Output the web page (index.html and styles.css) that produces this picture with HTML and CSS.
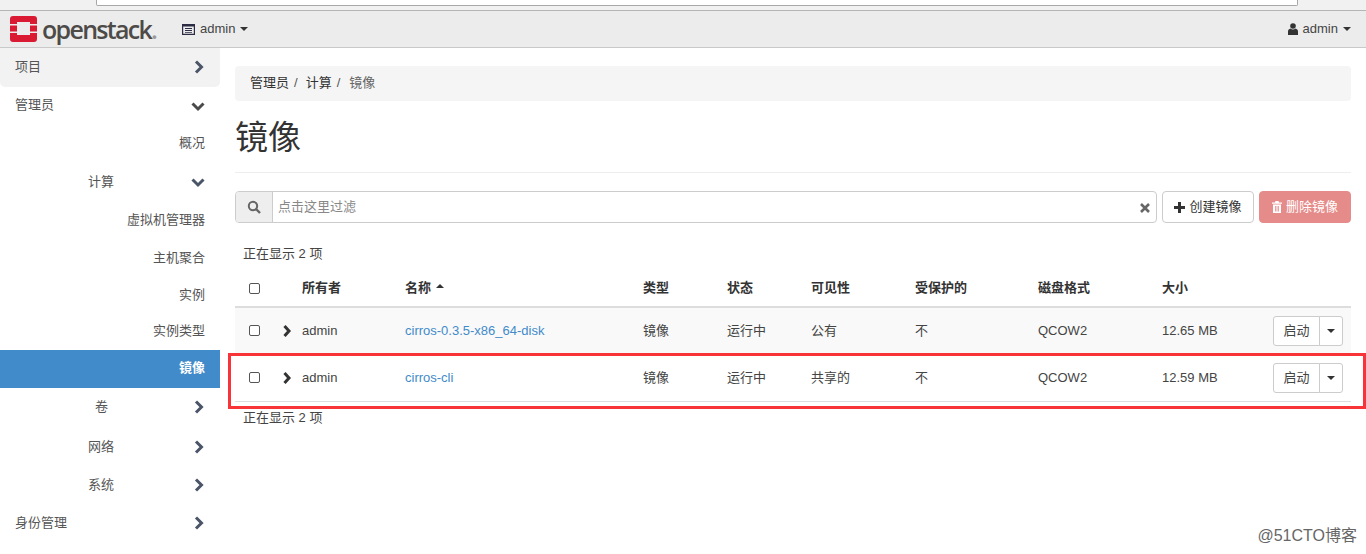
FILE: index.html
```
<!DOCTYPE html>
<html lang="zh-CN">
<head>
<meta charset="utf-8">
<title>镜像 - OpenStack</title>
<link rel="stylesheet" href="styles.css">
</head>
<body>
<div class="chrome"><div class="chrome-url"></div></div>
<header class="navbar">
  <div class="brand">
    <svg class="logo" width="27" height="26" viewBox="0 0 27 26"><path fill="#da1a32" d="M3 0h21a3 3 0 0 1 3 3v5h-7V6H7v2H0V3a3 3 0 0 1 3-3zM0 9.500h7v6H0zM20 9.500h7v6h-7zM0 17h7v2h13v-2h7v6a3 3 0 0 1-3 3H3a3 3 0 0 1-3-3z"/></svg>
    <span class="brand-name">openstack<span class="brand-dot">.</span></span>
  </div>
  <div class="nav-project">
    <svg class="nav-ico" width="13" height="11" viewBox="0 0 13 11"><path fill="#2c2c44" d="M0 0h13v11H0zM1.200 2.500v7.300h10.600V2.500z"/><path fill="#2c2c44" d="M3 4h7v1H3zM3 6h7v1H3zM3 8h7v.8H3z"/></svg>
    <span>admin</span><i class="caret"></i>
  </div>
  <div class="nav-user">
    <svg class="nav-ico" width="10" height="12" viewBox="0 0 10 12"><circle cx="5" cy="3" r="2.800" fill="#333"/><path fill="#333" d="M0 12V8.500C0 6.800 1.200 6 2.500 5.600 3.200 6.200 4 6.500 5 6.500s1.800-.3 2.500-.9C8.800 6 10 6.800 10 8.500V12z"/></svg>
    <span>admin</span><i class="caret"></i>
  </div>
</header>
<div class="layout">
  <nav class="sidebar">
    <a class="side-item lvl0 open-panel"><span>项目</span><svg class="chev-r" width="11" height="14" viewBox="0 0 11 14"><path d="M2 1.500 7.500 7 2 12.500" fill="none" stroke="#4a5568" stroke-width="3"/></svg></a>
    <a class="side-item lvl0"><span>管理员</span><svg width="14" height="11" viewBox="0 0 14 11"><path d="M1.500 2.500 7 8l5.500-5.500" fill="none" stroke="#4a4a4a" stroke-width="3"/></svg></a>
    <a class="side-item leaf tall"><span>概况</span></a>
    <a class="side-item lvl1"><span>计算</span><svg width="14" height="11" viewBox="0 0 14 11"><path d="M1.500 2.500 7 8l5.500-5.500" fill="none" stroke="#4a5568" stroke-width="3"/></svg></a>
    <a class="side-item leaf tall"><span>虚拟机管理器</span></a>
    <a class="side-item leaf"><span>主机聚合</span></a>
    <a class="side-item leaf"><span>实例</span></a>
    <a class="side-item leaf thin"><span>实例类型</span></a>
    <a class="side-item leaf active"><span>镜像</span></a>
    <a class="side-item lvl1 lvl1-c"><span>卷</span><svg class="chev-r" width="11" height="14" viewBox="0 0 11 14"><path d="M2 1.500 7.500 7 2 12.500" fill="none" stroke="#4a5568" stroke-width="3"/></svg></a>
    <a class="side-item lvl1"><span>网络</span><svg class="chev-r" width="11" height="14" viewBox="0 0 11 14"><path d="M2 1.500 7.500 7 2 12.500" fill="none" stroke="#4a5568" stroke-width="3"/></svg></a>
    <a class="side-item lvl1 short"><span>系统</span><svg class="chev-r" width="11" height="14" viewBox="0 0 11 14"><path d="M2 1.500 7.500 7 2 12.500" fill="none" stroke="#4a5568" stroke-width="3"/></svg></a>
    <a class="side-item lvl0"><span>身份管理</span><svg class="chev-r" width="11" height="14" viewBox="0 0 11 14"><path d="M2 1.500 7.500 7 2 12.500" fill="none" stroke="#4a5568" stroke-width="3"/></svg></a>
  </nav>
  <main class="content">
    <div class="breadcrumb"><span>管理员</span><em>/</em><span>计算</span><em>/</em><span class="bc-current">镜像</span></div>
    <h1 class="page-title">镜像</h1>
    <div class="toolbar">
      <div class="filter">
        <div class="filter-addon"><svg width="14" height="14" viewBox="0 0 14 14"><circle cx="6" cy="6" r="4.200" fill="none" stroke="#666" stroke-width="2"/><path d="M9 9l4 4" stroke="#666" stroke-width="2.400"/></svg></div>
        <div class="filter-input"><span>点击这里过滤</span><svg width="10" height="10" viewBox="0 0 10 10"><path d="M1 1l8 8M9 1 1 9" stroke="#666" stroke-width="2.600"/></svg></div>
      </div>
      <button class="btn"><svg width="11" height="11" viewBox="0 0 11 11"><path d="M5.500 0v11M0 5.500h11" stroke="#333" stroke-width="3"/></svg>创建镜像</button>
      <button class="btn btn-danger"><svg width="10" height="12" viewBox="0 0 10 12"><path fill="#fff" d="M3.500 0h3L7 1.500h3v1.200H0V1.500h3zM1 3.500h8V12H1z"/><path stroke="#e58c8a" stroke-width=".8" d="M3.500 5v5.500M5 5v5.500M6.500 5v5.500"/></svg>删除镜像</button>
    </div>
    <div class="count">正在显示 2 项</div>
    <div class="table-wrap">
      <table class="grid">
        <colgroup><col class="c1"><col class="c2"><col class="c3"><col class="c4"><col class="c5"><col class="c6"><col class="c7"><col class="c8"><col class="c9"><col class="c10"></colgroup>
        <thead>
          <tr><th class="cell-check"><i class="cb"></i></th><th></th><th>所有者</th><th>名称<i class="caret-up"></i></th><th>类型</th><th>状态</th><th>可见性</th><th>受保护的</th><th>磁盘格式</th><th>大小</th></tr>
        </thead>
        <tbody>
          <tr class="odd">
            <td class="cell-check"><i class="cb"></i></td>
            <td class="cell-exp"><svg class="exp" width="9" height="12" viewBox="0 0 9 12"><path d="M1.500 1 6 6l-4.500 5" fill="none" stroke="#333" stroke-width="3"/></svg></td>
            <td>admin</td><td><a class="link">cirros-0.3.5-x86_64-disk</a></td><td>镜像</td><td>运行中</td><td>公有</td><td>不</td><td>QCOW2</td><td>12.65 MB</td>
          </tr>
          <tr class="even">
            <td class="cell-check"><i class="cb"></i></td>
            <td class="cell-exp"><svg class="exp" width="9" height="12" viewBox="0 0 9 12"><path d="M1.500 1 6 6l-4.500 5" fill="none" stroke="#333" stroke-width="3"/></svg></td>
            <td>admin</td><td><a class="link">cirros-cli</a></td><td>镜像</td><td>运行中</td><td>共享的</td><td>不</td><td>QCOW2</td><td>12.59 MB</td>
          </tr>
        </tbody>
      </table>
      <div class="actions actions-1"><button class="split-main">启动</button><button class="split-caret"><i class="caret dark"></i></button></div>
      <div class="actions actions-2"><button class="split-main">启动</button><button class="split-caret"><i class="caret dark"></i></button></div>
    </div>
    <div class="count count-foot">正在显示 2 项</div>
  </main>
</div>
<div class="highlight"></div>
<div class="watermark">@51CTO博客</div>
</body>
</html>
```
FILE: styles.css
```
* { box-sizing: border-box; }
html, body { margin: 0; padding: 0; }
body {
  width: 1366px;
  height: 554px;
  overflow: hidden;
  position: relative;
  background: #fff;
  color: #333;
  font: 13px/18px "Liberation Sans", "Noto Sans CJK SC", sans-serif;
}
.chrome { height: 11px; background: #f1f1f1; border-bottom: 1px solid #b5b5b5; padding-left: 96px; }
.chrome-url { width: 1202px; height: 6px; background: #fff; border: 1px solid #a8a8a8; border-top: 0; border-radius: 0 0 2px 2px; }
.navbar { height: 37px; background: #ececec; border-bottom: 1px solid #c9c9c9; display: flex; align-items: center; padding: 0 15px 0 10px; }
.brand { display: flex; align-items: center; width: 172px; }
.logo { margin-right: 5px; }
.brand-name { font: 600 25px/28px "Open Sans", sans-serif; letter-spacing: -1.700px; color: #4d4a48; }
.brand-dot { color: #999; }
.nav-project, .nav-user { display: flex; align-items: center; color: #444; }
.nav-ico { margin-right: 5px; }
.nav-user { margin-left: auto; }
.caret { display: inline-block; width: 0; height: 0; margin-left: 5px; border: 4px solid transparent; border-top-color: #333; border-bottom: 0; }
.layout { display: flex; align-items: flex-start; }
.sidebar { width: 220px; flex: none; }
.side-item { display: flex; align-items: center; justify-content: flex-end; height: 39px; padding-right: 15px; color: #555; }
.side-item span { margin-bottom: 2px; }
.chev-r { margin-bottom: 2px; }
.side-item.leaf { height: 37px; }
.side-item.tall { height: 38px; }
.side-item.thin { height: 36px; }
.side-item.short { height: 38px; }
.side-item.lvl0 { justify-content: space-between; padding-left: 15px; height: 38px; }
.side-item.lvl1 { justify-content: space-between; padding-left: 88px; }
.side-item.lvl1-c { padding-left: 95px; height: 40px; }
.side-item.active { background: #428bca; color: #fff; font-weight: bold; height: 38px; }
.side-item.open-panel { background: #f2f2f2; border-radius: 0 0 5px 5px; height: 39px; }
.content { flex: 1; padding: 18px 15px 0; min-width: 0; }
.breadcrumb { height: 35px; background: #f5f5f5; border-radius: 4px; padding: 0 15px 2px; display: flex; align-items: center; color: #333; }
.breadcrumb em { font-style: normal; color: #555; margin: 0 8px 0 5px; }
.bc-current { color: #666; margin-left: 1px; }
.page-title { margin: 0 0 18px; height: 72px; padding-top: 1px; border-bottom: 1px solid #eee; font-size: 33px; font-weight: 400; line-height: 71px; color: #333; }
.toolbar { display: flex; gap: 5px; height: 32px; }
.filter { flex: 1; display: flex; border: 1px solid #ccc; border-radius: 4px; overflow: hidden; }
.filter-addon { width: 37px; background: #eee; border-right: 1px solid #ccc; display: flex; align-items: center; justify-content: center; }
.filter-input { flex: 1; display: flex; align-items: center; justify-content: space-between; padding: 0 6px 0 5px; color: #888; }
.filter-input svg { margin-top: 2px; }
.btn { height: 32px; width: 92px; border: 1px solid #ccc; border-radius: 4px; background: #fff; color: #333; font: inherit; padding: 0; display: flex; align-items: center; justify-content: center; gap: 4px; }
.btn-danger { background: #e58c8a; border-color: #e58c8a; color: #fff; }
.count { padding-left: 8px; margin-top: 22px; height: 18px; color: #444; }
.table-wrap { position: relative; margin-top: 7px; }
.grid { width: 1116px; table-layout: fixed; border-collapse: collapse; }
.c1 { width: 40px; } .c2 { width: 19px; } .c3 { width: 103px; } .c4 { width: 238px; } .c5 { width: 84px; }
.c6 { width: 84px; } .c7 { width: 104px; } .c8 { width: 123px; } .c9 { width: 124px; } .c10 { width: 197px; }
.grid th, .grid td { padding: 0 8px; text-align: left; vertical-align: middle; }
.grid thead tr { height: 37px; }
.grid th { border-bottom: 2px solid #ddd; font-weight: bold; color: #333; }
.grid tbody tr { height: 47px; border-bottom: 1px solid #ddd; color: #444; }
.grid tbody tr.odd { background: #f9f9f9; border-bottom: 0; }
.grid tbody tr.odd td { padding-bottom: 1px; }
.grid tbody tr.even td { padding-top: 1px; }
.grid .cell-check { padding-left: 14px; padding-right: 0; }
.grid .cell-exp { padding-left: 8px; padding-right: 0; }
.exp { display: block; }
.cb { display: block; width: 11px; height: 11px; border: 1px solid #555; border-radius: 2px; background: #fff; }
.caret-up { display: inline-block; width: 0; height: 0; margin-left: 5px; vertical-align: 4px; border: 4px solid transparent; border-bottom-color: #333; border-top: 0; }
.link { color: #428bca; }
.actions { position: absolute; right: 8px; display: flex; height: 30px; }
.actions-1 { top: 46px; }
.actions-2 { top: 93px; }
.split-main, .split-caret { background: #fff; border: 1px solid #ccc; font: inherit; color: #444; padding: 0; height: 30px; }
.split-main { width: 47px; border-radius: 3px 0 0 3px; }
.split-caret { width: 24px; margin-left: -1px; border-radius: 0 3px 3px 0; display: flex; align-items: center; justify-content: center; }
.caret.dark { margin: 0; }
.count.count-foot { margin-top: 7px; }
.highlight { position: absolute; left: 228px; top: 353px; width: 1138px; height: 56px; border: 3px solid #f93438; pointer-events: none; }
.watermark { position: absolute; right: 9px; top: 526px; font-size: 16px; line-height: 20px; color: #666; }
```
